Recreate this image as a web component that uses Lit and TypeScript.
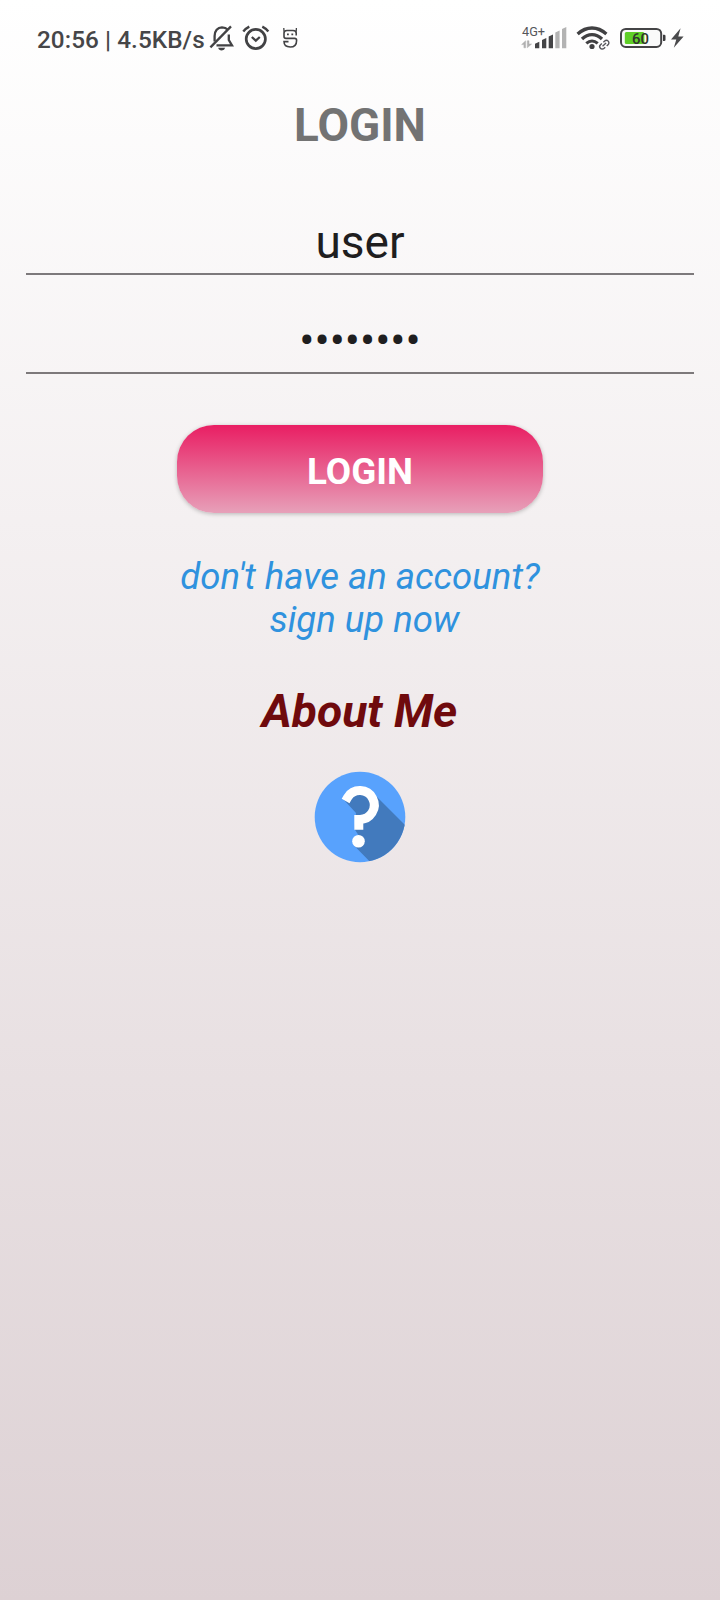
import { LitElement, html, css, svg } from "lit";
import { customElement, property } from "lit/decorators.js";

@customElement("status-bar")
class StatusBar extends LitElement {
  static styles = css`
    :host { display: block; height: 72px; color: #464648; }
    .bar { display: flex; height: 76px; align-items: center; padding-left: 37px; box-sizing: border-box; }
    .clock { font-weight: 500; font-size: 24.3px; letter-spacing: .06px; line-height: 28px; white-space: pre; width: 169px; padding-top: 3px; }
    svg { display: block; flex: none; }
    .bell { margin-left: 3px; }
    .alarm { margin-left: 8px; }
    .face { margin-left: 12px; }
    .signal { margin-left: auto; }
    .wifi { margin-left: 8px; }
    .battery { margin-left: 9px; }
    .bolt { margin: 0 35px 0 3px; }
    .net { font-size: 13px; }
    .level { font-size: 15.5px; font-weight: 500; }
  `;

  render() {
    const bars = [
      [14, 17, 1], [21, 13.3, 1], [27.7, 9.7, 1], [34.3, 5.8, 0], [41, 2.2, 0],
    ];
    return html`
      <div class="bar">
        <span class="clock">20:56 | 4.5KB/s</span>
        <svg class="bell" width="25" height="26" viewBox="209 25 25 26" fill="none" stroke="#424244" stroke-width="2.3">
          <path d="M214.6 41.5V36C214.6 31 217.6 27.4 222 27.3C224.6 27.3 226.4 28.2 227.6 29.6" />
          <path d="M228.8 34.5V40L232 45.4H216.5" />
          <path d="M231 26.4L210.4 47.4" />
          <path d="M218.2 47.8H225.2Q224.6 50.4 221.7 50.4Q218.8 50.4 218.2 47.8Z" fill="#424244" stroke="none" />
        </svg>
        <svg class="alarm" width="28" height="26" viewBox="242 25 28 26" fill="none" stroke="#424244" stroke-width="2.7">
          <circle cx="255.8" cy="39" r="9.6" />
          <path d="M243.3 31.5Q245.5 28.5 249.3 26.6M268.3 31.5Q266.1 28.5 262.3 26.6" stroke-width="2.4" />
          <path d="M251.8 37L255.8 40.6L259.8 37" stroke-width="2.3" />
        </svg>
        <svg class="face" width="17" height="22" viewBox="282 27 17 22" fill="none" stroke="#424244" stroke-width="1.6">
          <path d="M296.2 35.5V33Q296.2 30.5 293 30.5H287Q284 30.5 284 33V36.5Q284 38.4 286 38.4H294.6Q296.6 38.4 296.6 40.4Q296.6 47 290.2 47Q284 47 284 41.6H288.5" />
          <path d="M284 31.5L283.8 28M296.2 31.5L296.4 28" stroke-width="1.3" />
          <path d="M287 34.3h1.8M291.4 34.3h1.8" stroke-width="1.8" />
        </svg>
        <svg class="signal" width="48" height="26" viewBox="-1 0 48 26">
          <text class="net" x="1" y="10.8" fill="#55555a" textLength="23" lengthAdjust="spacingAndGlyphs">4G+</text>
          <path d="M.6 19.6L4.6 15.8V22.8H2.9V19.6ZM6.3 15.8H8V19H10.6L6.3 22.8Z" fill="#b0b0b0" stroke="#b0b0b0" stroke-width=".5" />
          ${bars.map(([x, y, on]) => svg`<path d="M${x} ${y + 1.8}L${x + 4.3} ${y - 0.2}V23.2H${x}Z" fill=${on ? "#444446" : "#b3b3b3"} />`)}
        </svg>
        <svg class="wifi" width="34" height="26" viewBox="576 25 34 26" fill="none" stroke="#404042" stroke-width="3.3">
          <path d="M577.6 34Q584.3 28 592 28Q599.7 28 606.4 34" />
          <path d="M582 39Q586.5 34.6 592 34.6Q597.5 34.6 602 39" />
          <path d="M586.3 43.3Q589 40.9 592 40.9Q595 40.9 597.7 43.3" stroke-width="3" />
          <circle cx="592" cy="46.5" r="2.6" fill="#404042" stroke="none" />
          <g transform="rotate(-42 604.3 44.7)" stroke="#55555a" stroke-width="1.4">
            <path d="M603.3 42.2H601.5A2.5 2.5 0 0 0 601.5 47.2H603.3M605.3 42.2H607.1A2.5 2.5 0 0 1 607.1 47.2H605.3M601.9 44.7H606.7" />
          </g>
        </svg>
        <svg class="battery" width="47" height="22" viewBox="619 27 47 22">
          <rect x="621" y="28.9" width="40.2" height="18.1" rx="4.8" fill="#fafafa" stroke="#444446" stroke-width="2" />
          <rect x="624.8" y="32" width="19.6" height="12" rx="1.5" fill="#5fcf27" />
          <path d="M663 34.8h1.2q1.3 0 1.3 1.3v3.6q0 1.3-1.3 1.3H663z" fill="#3d3d3f" />
          <text class="level" x="640.6" y="43.6" text-anchor="middle" fill="#30342d" textLength="17" lengthAdjust="spacingAndGlyphs">60</text>
        </svg>
        <svg class="bolt" width="16" height="22" viewBox="669 27 16 22">
          <path d="M680.6 28.3L671 39.6H676.3L673.8 47.8L683.6 36.6H678.3Z" fill="#4a4a4c" />
        </svg>
      </div>
    `;
  }
}

@customElement("text-field")
class TextField extends LitElement {
  @property() value = "";
  static styles = css`
    :host { display: block; margin: 0 26px; border-bottom: 2px solid #7d797b; height: 57px; padding-top: 1px; padding-bottom: 1px; font-size: 46px; }
    .value { line-height: 54px; color: #1f1e1f; text-align: center; }
  `;
  render() {
    return html`<div class="value">${this.value}</div>`;
  }
}

@customElement("app-root")
class AppRoot extends LitElement {
  static styles = css`
    :host {
      display: flex; flex-direction: column; height: 1600px; overflow: hidden;
      font-family: Roboto, sans-serif;
      background: linear-gradient(#ffffff, #ddd1d4);
    }
    .title { margin: 27px 0 0; text-align: center; font-size: 45.8px; line-height: 54px; font-weight: 700; color: #737373; }
    .user { margin-top: 61px; }
    .password { margin-top: 38px; font-size: 45px; }
    .login {
      align-self: center; margin-top: 51px; width: 366px; height: 88px; padding: 5px 0 0;
      border: 0; border-radius: 37px; color: #fff; font: 700 36.8px/44px Roboto, sans-serif;
      background: linear-gradient(#e91e63, #e7a0b9);
      box-shadow: 0 1px 4px rgba(0, 0, 0, .25);
    }
    .signup { margin-top: 42px; text-align: center; white-space: pre; font-size: 36.5px; line-height: 43px; font-style: italic; color: #2f92de; }
    .about { margin: 43px 1px 0 0; text-align: center; font-size: 46.2px; line-height: 54px; font-weight: 700; font-style: italic; color: #6f0a0d; }
    .help { align-self: center; margin-top: 33px; }
  `;

  render() {
    return html`
      <status-bar></status-bar>
      <h1 class="title">LOGIN</h1>
      <text-field class="user" value="user"></text-field>
      <text-field class="password" value="••••••••"></text-field>
      <button class="login">LOGIN</button>
      <div class="signup">${"don't have an account?\n sign up now"}</div>
      <div class="about">About Me</div>
      <svg class="help" width="92" height="92" viewBox="0 0 92 92">
        <clipPath id="disc"><circle cx="46" cy="46" r="45.3" /></clipPath>
        <circle cx="46" cy="46" r="45.3" fill="#58a2fd" />
        <path clip-path="url(#disc)" d="M30 29L42 42L40.5 58L45 65L40 74.5L68 103L104 67L60 23L45 19L33 26Z" fill="#427abd" />
        <path d="M31.6 29.9L33.7 26.3A14.4 14.4 0 1 1 45.4 48.4H44.8V58.8" fill="none" stroke="#fff" stroke-width="9" />
        <circle cx="44.5" cy="70.2" r="6.3" fill="#fff" />
      </svg>
    `;
  }
}
